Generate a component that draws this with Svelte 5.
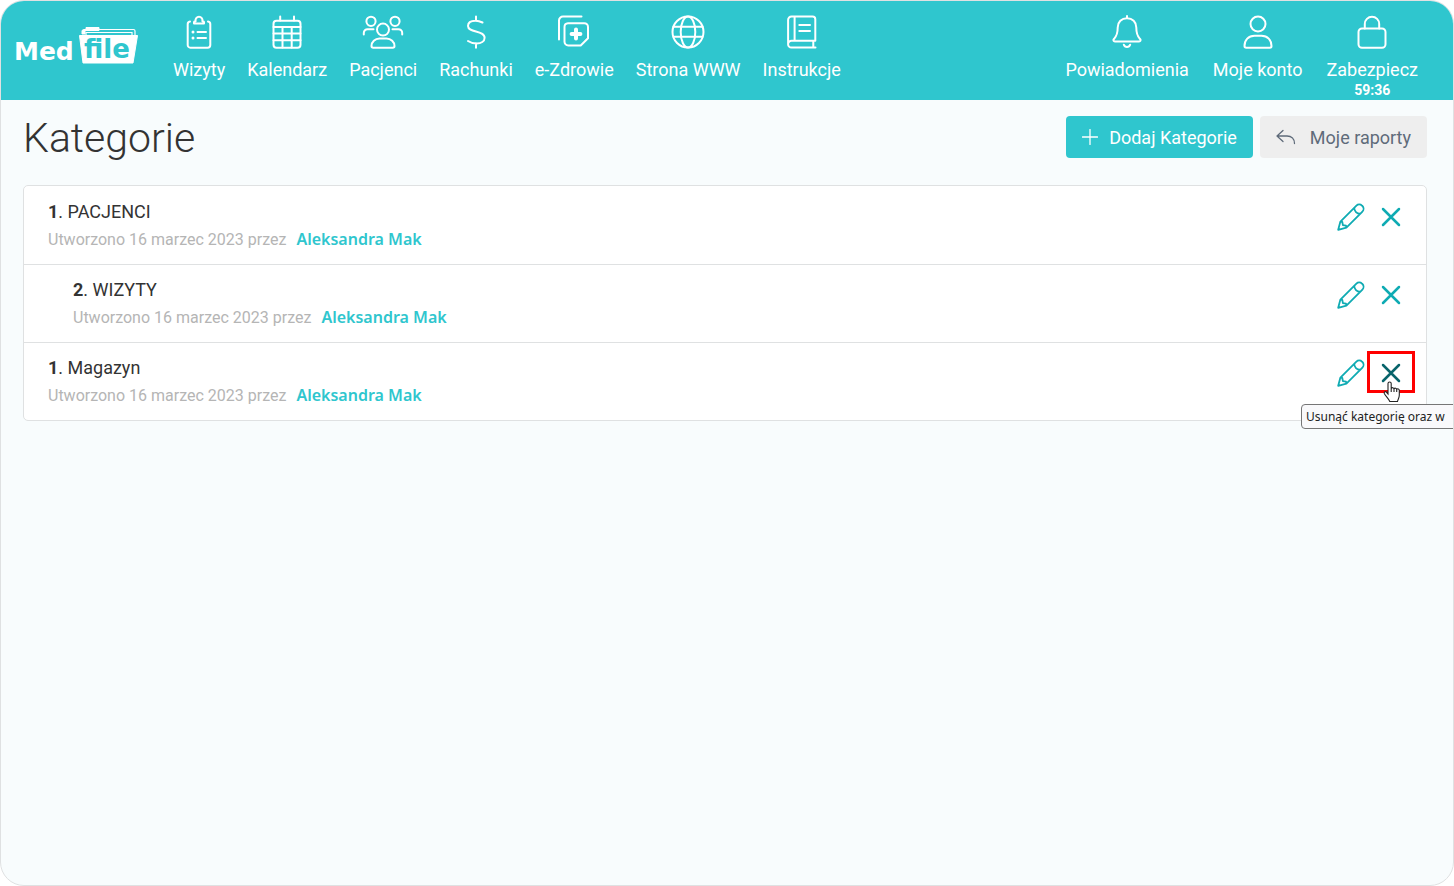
<script>
  const mainNav = [
    { label: "Wizyty", icon: "visits" },
    { label: "Kalendarz", icon: "calendar" },
    { label: "Pacjenci", icon: "patients" },
    { label: "Rachunki", icon: "bills" },
    { label: "e-Zdrowie", icon: "health" },
    { label: "Strona WWW", icon: "globe" },
    { label: "Instrukcje", icon: "book" },
  ];

  const userNav = [
    { label: "Powiadomienia", icon: "bell" },
    { label: "Moje konto", icon: "user" },
    { label: "Zabezpiecz", icon: "lock", timer: "59:36" },
  ];

  let categories = [
    { id: 1, number: 1, name: "PACJENCI", level: 0 },
    { id: 2, number: 2, name: "WIZYTY", level: 1 },
    { id: 3, number: 1, name: "Magazyn", level: 0 },
  ];

  let created = "16 marzec 2023";
  let author = "Aleksandra Mak";
  let hoveredId = 3;

  function removeCategory(id) {
    categories = categories.filter((c) => c.id !== id);
  }
</script>

{#snippet navItem(item)}
  <a class="nav__item" href="#{item.icon}">
    <svg class="nav__icon" viewBox="0 0 40 34" aria-hidden="true">
      {#if item.icon === "visits"}
        <path d="M11 6.500a2.600 2.600 0 0 0-2.300 2.700V30a2.700 2.700 0 0 0 2.700 2.700h17.200a2.700 2.700 0 0 0 2.700-2.700V9.200a2.600 2.600 0 0 0-2.300-2.700" />
        <path d="M15 8.500V7.500q0-1.300 1.600-1.300a3.500 3.500 0 1 1 6.800 0q1.600 0 1.600 1.300v1z" />
        <path d="M18.500 17H27M18.500 23H27" />
        <circle class="solid" cx="14" cy="17" r="1.500" />
        <circle class="solid" cx="14" cy="23" r="1.500" />
      {:else if item.icon === "calendar"}
        <rect x="6.500" y="5.700" width="27" height="27" rx="3" />
        <path d="M13.200 1.500v4M27 1.500v4M6.500 12h27M6.500 18.600h27M6.500 25.300h27M15.500 12v20.500M24.700 12v20.500" />
      {:else if item.icon === "patients"}
        <circle cx="8" cy="6.300" r="4.600" />
        <circle cx="32" cy="6.300" r="4.600" />
        <circle cx="20" cy="14.600" r="6" />
        <path d="M8.500 31c0-4 3.500-7.500 8-7.500h7c4.500 0 8 3.500 8 7.500q0 1.700-1.700 1.700H10.200Q8.500 32.700 8.500 31z" />
        <path d="M.8 19.500v-1.500a3.800 3.800 0 0 1 3.800-3.800H10.500M39.200 19.500v-1.500a3.800 3.800 0 0 0-3.800-3.800H29.500" />
      {:else if item.icon === "bills"}
        <path d="M20 1.500v4.300M20 28.300v4.400M26.500 7.500C24 6.200 21.800 5.700 19.500 5.700c-4.600 0-7.500 2-7.500 5.300 0 7 16.600 4 16.600 11.800 0 3.700-3.600 5.700-8 5.700-3.100 0-6.100-.8-8.600-2.500" />
      {:else if item.icon === "health"}
        <path d="M5 24.500V5.500a4 4 0 0 1 4-4H27.500" />
        <path d="M14 8.200H30.300a3.700 3.700 0 0 1 3.700 3.700V23.200L26.700 30.500H14.200a3.700 3.700 0 0 1-3.700-3.700V11.900A3.700 3.700 0 0 1 14 8.200z" />
        <path class="cross" d="M22 14.600v8.800M17.600 19h8.800" />
      {:else if item.icon === "globe"}
        <circle cx="20" cy="17" r="15.500" />
        <ellipse cx="20" cy="17" rx="7.300" ry="15.500" />
        <path d="M5.500 11.700h29M5.500 21.700h29" />
      {:else if item.icon === "book"}
        <path d="M33.300 25.700V4.200a2.700 2.700 0 0 0-2.700-2.700H9.500a3.400 3.400 0 0 0-3.400 3.400V29.200a3.300 3.300 0 0 0 3.400 3.400H33.500M33.300 25.700H9.500a3.400 3.400 0 0 0-3.400 3.400M31.300 25.700v6.700M12.600 1.500v24" />
        <path d="M17.300 10H28M17.300 16H28" />
      {:else if item.icon === "bell"}
        <path d="M20 1v2.200M20 3.200c-5.400 0-9.300 3.800-9.300 9.200 0 7.400-1.700 9-3.800 11.600-1 1.200-.4 2.500 1 2.500h24.200c1.400 0 2-1.300 1-2.500-2.100-2.600-3.800-4.200-3.800-11.600 0-5.400-3.900-9.200-9.300-9.200z" />
        <path d="M16.800 29.700a3.400 3.400 0 0 0 6.400 0" />
      {:else if item.icon === "user"}
        <circle cx="20" cy="9" r="7.500" />
        <path d="M6.500 31c0-6 4-10.200 10-10.200h7c6 0 10 4.200 10 10.200q0 1.700-1.700 1.700H8.200Q6.500 32.700 6.500 31z" />
      {:else if item.icon === "lock"}
        <rect x="6.500" y="13.500" width="27" height="19.200" rx="3.500" />
        <path d="M12.800 13.500V9a7.200 7.200 0 0 1 14.400 0v4.500" />
      {/if}
    </svg>
    <span class="nav__label">{item.label}</span>
    {#if item.timer}
      <span class="nav__timer">{item.timer}</span>
    {/if}
  </a>
{/snippet}

<div class="app">
  <header class="header">
    <a class="logo" href="#home" aria-label="MedFile">
      <svg viewBox="0 0 124 42" width="124" height="42">
        <text class="logo__text" x="-1" y="35" font-size="25">Med</text>
        <path class="logo__back" d="M71 10V7.500H117V10M84 4.500H118.500Q120 4.500 120 6V10" />
        <path class="logo__folder" d="M67 9V5.500L68.500 4.500H71V2.500H84V5.500H70V9z" />
        <path class="logo__folder" d="M64.500 10.500H122.500L118 38H68z" />
        <text class="logo__text logo__text--file" x="69" y="33" font-size="26">file</text>
      </svg>
    </a>
    <nav class="nav">
      {#each mainNav as item}
        {@render navItem(item)}
      {/each}
    </nav>
    <nav class="nav nav--user">
      {#each userNav as item}
        {@render navItem(item)}
      {/each}
    </nav>
  </header>

  <main>
    <div class="title-bar">
      <h1>Kategorie</h1>
      <div class="title-bar__buttons">
        <button class="btn btn--primary">
          <svg viewBox="0 0 16 16" width="16" height="16" aria-hidden="true">
            <path d="M8 .5v15M.5 8h15" />
          </svg>
          Dodaj Kategorie
        </button>
        <button class="btn btn--back">
          <svg viewBox="0 0 20 16" width="20" height="16" aria-hidden="true">
            <path d="M7 1.500L1 7l6 5.500M1 7h10c4.500 0 7.500 3 7.500 7.500" />
          </svg>
          Moje raporty
        </button>
      </div>
    </div>

    <ul class="list">
      {#each categories as category (category.id)}
        <li class="row" class:row--nested={category.level > 0}>
          <div class="row__body">
            <div class="row__title">
              <b>{category.number}</b>. {category.name}
            </div>
            <div class="row__meta">
              <span>Utworzono {created} przez</span>
              <a class="row__author" href="#author">{author}</a>
            </div>
          </div>
          <div class="row__actions">
            <button class="icon-btn" aria-label="Edytuj">
              <svg viewBox="0 0 28 28" width="28" height="28" aria-hidden="true">
                <path d="M1.200 26.800L3.400 18.600 19.400 2.600a4 4 0 0 1 5.600 0l.4.4a4 4 0 0 1 0 5.600L9.400 24.600zM3.400 18.600l1.900.4.600 3.100 3.100.600.4 1.900M17.300 4.700a5.700 5.700 0 0 0 6 6" />
              </svg>
            </button>
            <button
              class="icon-btn icon-btn--remove"
              class:hovered={category.id === hoveredId}
              aria-label="Usuń"
              on:click={() => removeCategory(category.id)}
            >
              <svg viewBox="0 0 20 20" width="20" height="20" aria-hidden="true">
                <path d="M2 2l16 16M18 2L2 18" />
              </svg>
            </button>
            {#if category.id === hoveredId}
              <div class="highlight"></div>
              <div class="tooltip">Usunąć kategorię oraz w</div>
              <svg class="cursor" viewBox="0 0 18 22" aria-hidden="true">
                <path d="M5 13V2.600a1.600 1.600 0 0 1 3.200 0V7.500a1.500 1.500 0 0 1 2.800.3 1.500 1.500 0 0 1 2.700.5 1.500 1.500 0 0 1 2.600 1V14c0 3-1.300 4-1.800 6.500H6.800C6 18 2.500 15 1.300 12.500c-.6-1.400 1-2.400 2.100-1.400zM8.200 7.500V11M11 8v3M13.700 8.500V11" />
              </svg>
            {/if}
          </div>
        </li>
      {/each}
    </ul>
  </main>
</div>

<style>
  :global(body) {
    margin: 0;
    background: #fff;
  }

  * {
    box-sizing: border-box;
  }

  .app {
    --clr-teal: #2fc6ce;
    --clr-border: #dfe1e2;
    min-height: 100vh;
    border: 1px solid var(--clr-border);
    border-radius: 24px;
    overflow: hidden;
    background: #f8fcfd;
    color: #333;
    font-family: Roboto, sans-serif;
    font-size: 18px;
  }

  a {
    text-decoration: none;
  }

  .header {
    display: flex;
    align-items: flex-start;
    height: 99px;
    padding: 14px 35px 0 14px;
    background: var(--clr-teal);
  }

  .logo {
    margin: 10px 34px 0 0;
  }

  .logo svg {
    display: block;
  }

  .logo__text {
    font-family: "DejaVu Sans", sans-serif;
    font-weight: bold;
    fill: #fff;
  }

  .logo__text--file {
    fill: var(--clr-teal);
  }

  .logo__folder {
    fill: #fff;
    stroke: #fff;
    stroke-linejoin: round;
  }

  .logo__back {
    fill: none;
    stroke: #fff;
    stroke-width: 1.2;
  }

  .nav {
    display: flex;
    gap: 22px;
  }

  .nav--user {
    gap: 24px;
    margin-left: auto;
  }

  .nav__item {
    display: flex;
    flex-direction: column;
    align-items: center;
    color: #fff;
    white-space: nowrap;
  }

  .nav__icon {
    width: 40px;
    height: 34px;
    overflow: visible;
    fill: none;
    stroke: #fff;
    stroke-width: 2;
    stroke-linecap: round;
    stroke-linejoin: round;
  }

  .solid {
    fill: #fff;
    stroke: none;
  }

  .cross {
    stroke-width: 4;
  }

  .nav__label {
    margin-top: 9px;
    line-height: 24px;
  }

  .nav__timer {
    font-size: 14px;
    font-weight: bold;
    line-height: 16px;
  }

  main {
    padding: 16px 26px 24px 22px;
  }

  .title-bar {
    display: flex;
    justify-content: space-between;
    align-items: flex-start;
  }

  h1 {
    margin: 0;
    font-size: 41px;
    font-weight: 300;
    line-height: 44px;
  }

  .title-bar__buttons {
    display: flex;
    gap: 7px;
  }

  .btn {
    display: flex;
    align-items: center;
    height: 42px;
    padding: 0 16px;
    border: 0;
    border-radius: 4px;
    font: inherit;
    cursor: pointer;
  }

  .btn svg {
    fill: none;
    stroke: currentColor;
    stroke-width: 1.3;
    stroke-linecap: round;
    stroke-linejoin: round;
  }

  .btn--primary {
    gap: 11px;
    background: var(--clr-teal);
    color: #fff;
  }

  .btn--back {
    gap: 14px;
    background: #eee;
    color: #5f6b7a;
  }

  .list {
    margin: 25px 0 0;
    padding: 0;
    list-style: none;
    background: #fff;
    border: 1px solid var(--clr-border);
    border-radius: 5px;
  }

  .row {
    display: flex;
    justify-content: space-between;
    align-items: flex-start;
    padding: 14px 21px 11px 24px;
  }

  .row--nested {
    padding-left: 49px;
  }

  .row + .row {
    padding-top: 13px;
    border-top: 1px solid var(--clr-border);
  }

  .row__title {
    line-height: 24px;
  }

  .row__meta {
    display: flex;
    align-items: baseline;
    gap: 10px;
    margin-top: 2px;
    color: #b5b5b5;
    font-size: 16px;
    line-height: 26px;
  }

  .row__author {
    color: var(--clr-teal);
    font-family: "Noto Sans", sans-serif;
    font-weight: 600;
  }

  .row__actions {
    position: relative;
    display: flex;
    align-items: center;
    gap: 12px;
    margin-top: 3px;
  }

  .icon-btn {
    display: flex;
    align-items: center;
    justify-content: center;
    width: 28px;
    height: 28px;
    padding: 0;
    border: 0;
    background: none;
    color: #0fabb3;
    cursor: pointer;
  }

  .icon-btn svg {
    fill: none;
    stroke: currentColor;
    stroke-width: 1.8;
    stroke-linecap: round;
    stroke-linejoin: round;
  }

  .icon-btn--remove svg {
    stroke-width: 2.5;
  }

  .hovered {
    color: #08646b;
  }

  .highlight {
    position: absolute;
    top: -8px;
    right: -10px;
    width: 48px;
    height: 42px;
    border: 3px solid #f00;
    pointer-events: none;
  }

  .tooltip {
    position: absolute;
    top: 45px;
    left: -36px;
    width: 180px;
    height: 25px;
    padding-left: 4px;
    border: 1px solid #767676;
    border-radius: 4px;
    background: #f9f9fb;
    color: #222;
    font-family: "Noto Sans", sans-serif;
    font-size: 12px;
    line-height: 24px;
    white-space: nowrap;
  }

  .cursor {
    position: absolute;
    top: 22px;
    right: 4px;
    width: 18px;
    height: 22px;
    fill: #fff;
    stroke: #222;
    stroke-width: 1.1;
    pointer-events: none;
  }
</style>
